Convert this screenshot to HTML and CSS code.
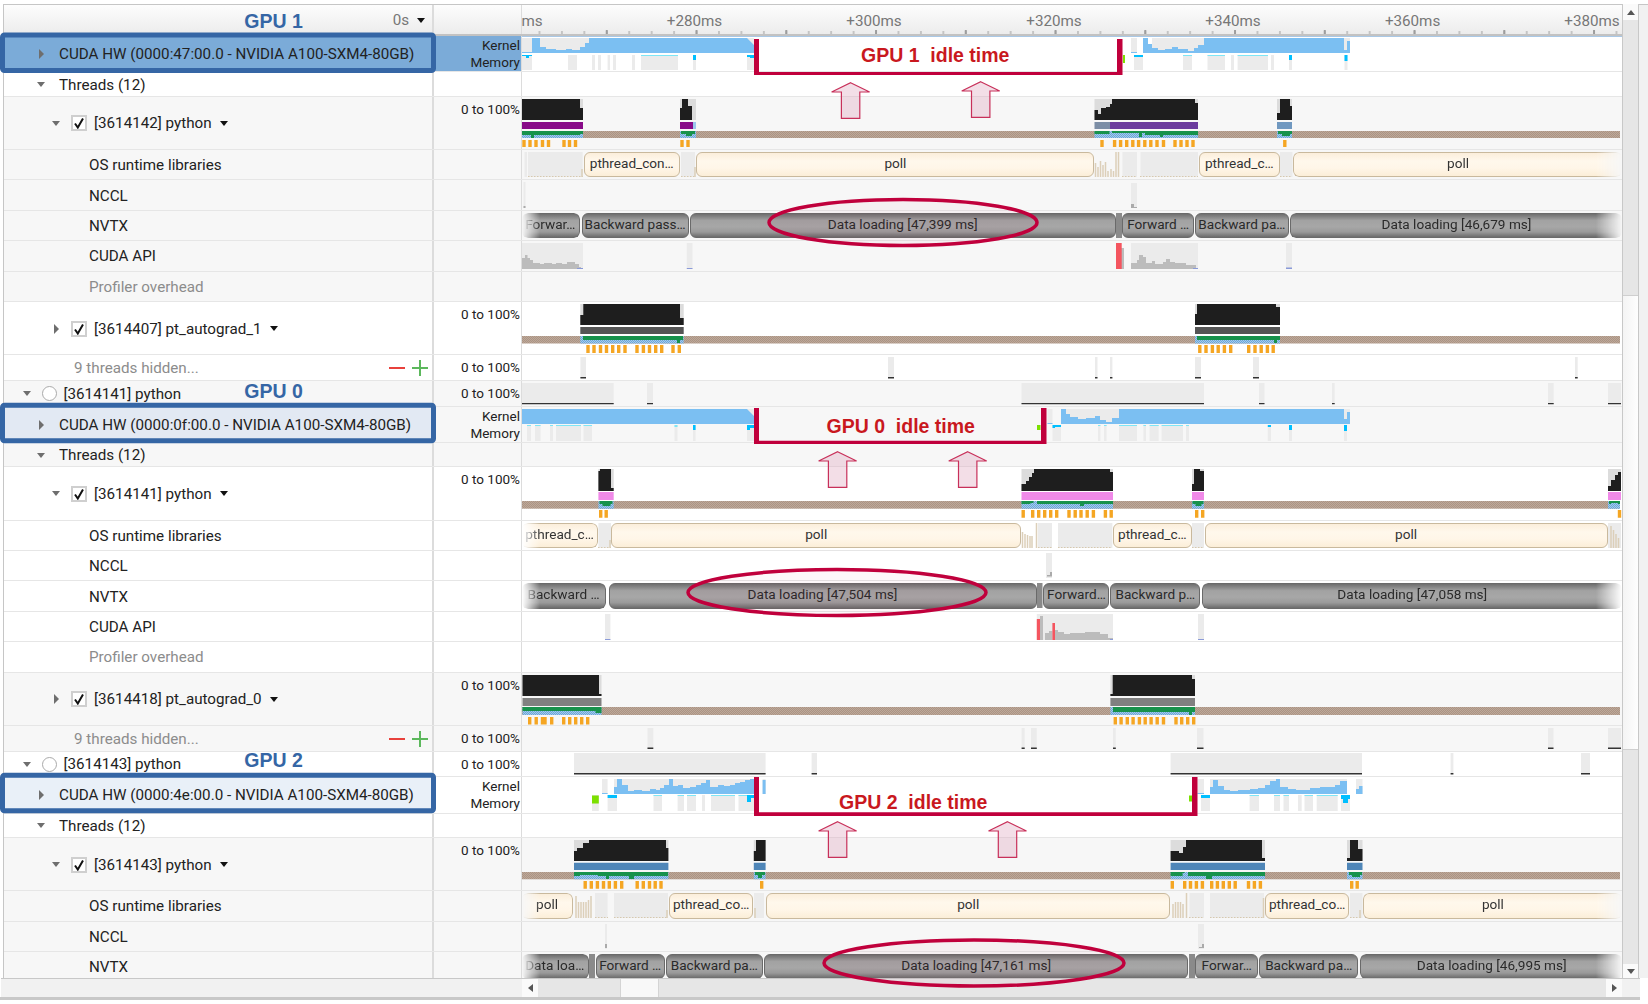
FILE: index.html
```html
<!DOCTYPE html>
<html lang="en">
<head>
    <meta charset="UTF-8">
    <title>Nsight Systems timeline</title>
    <link rel="stylesheet" href="styles.css">
</head>
<body>

<svg class="defs" width="0" height="0">
    <defs>
        <pattern id="dither" width="2" height="2" patternUnits="userSpaceOnUse">
            <rect width="2" height="2" fill="#bda899"/><rect width="1" height="1" fill="#ab9484"/><rect x="1" y="1" width="1" height="1" fill="#ab9484"/>
        </pattern>
        <pattern id="dither-blue" width="2" height="2" patternUnits="userSpaceOnUse">
            <rect width="2" height="2" fill="#a5cbec"/><rect width="1" height="1" fill="#6aa5d8"/><rect x="1" y="1" width="1" height="1" fill="#6aa5d8"/>
        </pattern>
        <path id="up-arrow" d="M0 0L19 9.3H9.2V35.6H-9.2V9.3H-19Z"/>
    </defs>
</svg>

<div class="window">
    <div class="frame">
        <div class="rows">

            <div class="row head">
                <div class="label head-label"><span class="time-mode">0s</span><span class="caret-menu"></span></div>
                <div class="scale"></div>
                <div class="track ruler">
                    <span class="tick-label" style="left:-7px">+260ms</span>
                    <span class="tick-label" style="left:172.5px">+280ms</span>
                    <span class="tick-label" style="left:352px">+300ms</span>
                    <span class="tick-label" style="left:532px">+320ms</span>
                    <span class="tick-label" style="left:711px">+340ms</span>
                    <span class="tick-label" style="left:890.6px">+360ms</span>
                    <span class="tick-label" style="left:1070px">+380ms</span>
                </div>
            </div>

            <!-- GPU 1 -->
            <div class="row h-hw">
                <div class="label lv-hw selected"><span class="caret-r"></span>CUDA HW (0000:47:00.0 - NVIDIA A100-SXM4-80GB)</div>
                <div class="scale selected two-line">Kernel<br>Memory</div>
                <div class="track">
                    <svg class="chart" width="1100" height="37" viewBox="522 36 1100 37">
                        <path class="sel-line" d="M522 36.5H1622M522 72.5H1622"/>
                        <path class="pale" d="M522 38h10v15h-10zM540 38h49v15h-49zM747 38h7v15h-7zM1131 38h6v15h-6zM1152 38h52v15h-52zM1344 38h6v15h-6z"/>
                        <path class="kernel" d="M522 53V52H532V38H540V47H546V49H556V50H566V49H572V50H580V47H585V43H589V38H747L754 45V53ZM1131 53V52H1137V53ZM1143 53V38H1148V44H1152V48H1158V50H1165V49H1172V47H1178V49H1188V51H1194V48H1198V45H1204V38H1344V50H1347V41H1350V53Z"/>
                        <path class="pale" d="M522 55h10v15h-10zM568 55h9v15h-9zM592 55h3v15h-3zM598 55h3v15h-3zM607.6 55h2.4v15h-2.4zM613 55h3v15h-3zM632 55h3v15h-3zM641 55h37v15h-37zM693 55h3v15h-3zM747 55h7v15h-7zM1134 55h9v15h-9zM1183 55h9v15h-9zM1207.5 55h17.5v15h-17.5zM1231 55h3v15h-3zM1237.6 55h30.4v15h-30.4zM1271 55h3v15h-3zM1289 55h3v15h-3zM1344.5 55h3v15h-3z"/>
                        <path class="cyan" d="M522 55h10v1h-3v2h-3v-2h-4zM693 55h3v5h-3zM747 55h7v3h-4v-1h-3zM1134 55h9v2h-9zM1289 55h3v5h-3zM1344.5 55h3v6h-3z"/>
                        <path class="cyan-l" d="M641 55h37v1h-37zM1183 55h9v1h-9zM1207.5 55h17.5v1h-17.5zM1237.6 55h30.4v1h-30.4z"/>
                        <rect class="lime" x="1123" y="55" width="2" height="8"/>
                    </svg>
                </div>
            </div>
            <div class="row h-threads">
                <div class="label lv-threads"><span class="caret-d"></span>Threads (12)</div>
                <div class="scale"></div>
                <div class="track"></div>
            </div>
            <div class="row h-thread alt">
                <div class="label lv-thread"><span class="caret-d"></span><span class="check"><svg width="12" height="12" viewBox="0 0 12 12"><path d="M2 6.5L4.8 10.5L10 1.5"/></svg></span>[3614142] python<span class="caret-menu"></span></div>
                <div class="scale">0 to 100%</div>
                <div class="track">
                    <svg class="chart" width="1100" height="53" viewBox="522 97 1100 53">
                        <path class="cpu-bg" d="M522 99h61v21h-61zM680 99h16v21h-16zM1094.5 99h103.5v21h-103.5zM1277 99h15v21h-15z"/>
                        <path class="cpu" d="M522 120V99H580V108H583V120ZM680 120V108H682V99H688V106H692V120ZM1094.5 120V110H1098V114H1101V108H1106V107H1110V104H1112V99H1195V103H1198V120ZM1277 120V113H1280V99H1290V106H1292V120Z"/>
                        <rect x="522" y="122" width="61" height="7" fill="#880a88"/>
                        <rect x="680" y="122" width="13" height="7" fill="#880a88"/>
                        <rect x="693" y="122" width="3" height="7" fill="#9cc7ee"/>
                        <rect x="1094.5" y="122" width="16" height="7" fill="#7c8ea6"/>
                        <rect x="1110" y="122" width="88" height="7" fill="#6c3c9e"/>
                        <rect x="1277" y="122" width="15" height="7" fill="#7098c0"/>
                        <rect x="522" y="131" width="1098" height="7" fill="url(#dither)"/>
                        <path fill="url(#dither-blue)" d="M522 131h61v7h-61zM680 131h16v7h-16zM1094.5 131h103.5v7h-103.5zM1277 131h15v7h-15z"/>
                        <path class="green" d="M522 131h61v3h-3v1h-40h-6v3h-3v-3h-9zM681 131h14v3h-3v2h-6v-2h-5zM1094.5 131h15v3h-15zM1112 131h86v4h-35v2h-3v-2h-15v-2h-3v4h-3v-4h-27zM1278 131h14v3h-2v2h-8v-2h-4z"/>
                        <path class="ticks" d="M524 140v7M530 140v7M536 140v7M542.5 140v7M548.5 140v7M564 140v7M569.5 140v7M575.5 140v7M682 140v7M688 140v7M1102 140v7M1114.6 140v7M1120.6 140v7M1126.7 140v7M1132.8 140v7M1138.6 140v7M1144.8 140v7M1150.8 140v7M1157 140v7M1163.5 140v7M1175 140v7M1181 140v7M1187 140v7M1193 140v7M1284.8 140v7"/>
                    </svg>
                </div>
            </div>
            <div class="row h-sub alt">
                <div class="label lv-sub">OS runtime libraries</div>
                <div class="scale"></div>
                <div class="track">
                    <svg class="chart" width="1100" height="30" viewBox="522 150 1100 30">
                        <path class="pale" d="M524.5 152h2.5v25h-2.5zM528 152h54.7v25h-54.7zM681 152h14v25h-14zM1122.4 152h14.6v25h-14.6zM1140.5 152h57.5v25h-57.5zM1280 152h12.5v25h-12.5z"/>
                        <path class="dots" d="M528 176.5H583M681 176.5H695M1122 176.5H1137M1140 176.5H1198M1280 176.5H1292"/>
                        <path class="hatch" d="M582 177v-8M695 177v-10M1095.5 177v-14M1098 177v-10M1100.5 177v-16M1103 177v-12M1105.5 177v-15M1108 177v-6M1111 177v-8M1113.5 177v-6M1116 177v-25M1118.5 177v-25"/>
                    </svg>
                    <span class="slice os" style="left:61.5px;width:96.5px">pthread_con…</span>
                    <span class="slice os" style="left:174.4px;width:398px">poll</span>
                    <span class="slice os" style="left:677px;width:80.6px">pthread_c…</span>
                    <span class="slice os fade-r" style="left:771px;width:329px">poll</span>
                </div>
            </div>
            <div class="row h-sub alt">
                <div class="label lv-sub">NCCL</div>
                <div class="scale"></div>
                <div class="track">
                    <svg class="chart" width="1100" height="30" viewBox="522 180 1100 30">
                        <path class="pale" d="M523.5 182h2v26h-2zM1131 183h6v25h-6z"/>
                        <path class="foot" d="M523.5 206h2v2h-2zM1131 204h3v3h3v1h-6z"/>
                    </svg>
                </div>
            </div>
            <div class="row h-sub alt">
                <div class="label lv-sub">NVTX</div>
                <div class="scale"></div>
                <div class="track">
                    <svg class="chart" width="1100" height="30" viewBox="522 211 1100 30">
                        <rect class="sliver" x="1116" y="213" width="6" height="25"/>
                    </svg>
                    <span class="slice nvtx fade-l" style="left:0;width:57.6px">Forwar…</span>
                    <span class="slice nvtx" style="left:59.5px;width:107.2px">Backward pass…</span>
                    <span class="slice nvtx" style="left:168px;width:425.5px">Data loading [47,399 ms]</span>
                    <span class="slice nvtx" style="left:600.4px;width:71.6px">Forward …</span>
                    <span class="slice nvtx" style="left:673px;width:93.7px">Backward pa…</span>
                    <span class="slice nvtx fade-r" style="left:768px;width:332px">Data loading [46,679 ms]</span>
                </div>
            </div>
            <div class="row h-sub alt">
                <div class="label lv-sub">CUDA API</div>
                <div class="scale"></div>
                <div class="track">
                    <svg class="chart" width="1100" height="30" viewBox="522 241 1100 30">
                        <path class="pale" d="M522 243h61v26h-61zM686.8 243h5.7v26h-5.7zM1131 243h67v26h-67zM1286 243h6v26h-6z"/>
                        <path class="bars" d="M522 269V258H525V255H527.5V258H530V260H533V263H540V264H544V263H552V264H556V263H562V264H567V262H575V264H579V267H581V269ZM1116 269V248H1124V269ZM1131 269V263H1137V260H1139V255H1143V257H1146V263H1152V261H1155V264H1163V262H1166V259H1170V262H1175V263H1186V265H1196V269Z"/>
                        <rect x="1116" y="243" width="5.7" height="26" fill="url(#red-fade)" class="red"/>
                        <path class="foot-blue" d="M577 268h6v1h-6zM686.8 268h5.7v1h-5.7zM1193 268h5v1h-5zM1286 267.5h6v1.5h-6z"/>
                    </svg>
                </div>
            </div>
            <div class="row h-sub alt">
                <div class="label lv-sub muted">Profiler overhead</div>
                <div class="scale"></div>
                <div class="track"></div>
            </div>
            <div class="row h-thread">
                <div class="label lv-thread"><span class="caret-r"></span><span class="check"><svg width="12" height="12" viewBox="0 0 12 12"><path d="M2 6.5L4.8 10.5L10 1.5"/></svg></span>[3614407] pt_autograd_1<span class="caret-menu"></span></div>
                <div class="scale">0 to 100%</div>
                <div class="track">
                    <svg class="chart" width="1100" height="53" viewBox="522 302 1100 53">
                        <path class="cpu-bg" d="M580.3 304h103.4v21h-103.4zM1195 304h85v21h-85z"/>
                        <path class="cpu" d="M580.3 325V315H583.3V304H680V318H683.7V325ZM1195 325V314H1197V304H1276V307H1280V325Z"/>
                        <rect x="580.3" y="327" width="103.4" height="7" fill="#555"/>
                        <rect x="1195" y="327" width="85" height="7" fill="#555"/>
                        <rect x="522" y="336" width="1098" height="7.5" fill="url(#dither)"/>
                        <path fill="url(#dither-blue)" d="M580.3 336h103.4v7.5h-103.4zM1195 336h85v7.5h-85z"/>
                        <path class="green" d="M583 336h100v4h-3v3h-3v-3h-94zM1197 336h83v4h-3v3h-3v-3h-77z"/>
                        <path class="ticks" d="M588 345v8M594 345v8M600.5 345v8M606.5 345v8M612.7 345v8M618.7 345v8M625 345v8M637 345v8M643.4 345v8M649.5 345v8M655.7 345v8M661.7 345v8M673 345v8M679.3 345v8M1199.8 345v8M1206 345v8M1212.4 345v8M1218.2 345v8M1224.4 345v8M1230.7 345v8M1248.7 345v8M1255 345v8M1261.2 345v8M1267.4 345v8M1273.2 345v8"/>
                    </svg>
                </div>
            </div>
            <div class="row h-hidden">
                <div class="label lv-hidden muted">9 threads hidden...<span class="hide-btns"><svg width="39" height="16" viewBox="0 0 39 16"><path class="minus" d="M0 8H16"/><path class="plus" d="M23 8H39M31 0V16"/></svg></span></div>
                <div class="scale">0 to 100%</div>
                <div class="track">
                    <svg class="chart" width="1100" height="26" viewBox="522 355 1100 26">
                        <path class="pale" d="M580.4 357h5.6v21h-5.6zM888 357h6v21h-6zM1095 357h2.5v21h-2.5zM1110 357h2.4v21h-2.4zM1195 357h6v21h-6zM1253 357h6v21h-6zM1575 357h2.7v21h-2.7z"/>
                        <path class="black-foot" d="M580.4 377h5.6v1.5h-5.6zM888 377h6v1.5h-6zM1095 377h2.5v1.5h-2.5zM1110 377h2.4v1.5h-2.4zM1195 377h6v1.5h-6zM1253 377h6v1.5h-6zM1575 377h2.7v1.5h-2.7z"/>
                    </svg>
                </div>
            </div>

            <!-- GPU 0 -->
            <div class="row h-proc alt">
                <div class="label lv-proc"><span class="caret-d"></span><span class="radio"></span>[3614141] python</div>
                <div class="scale">0 to 100%</div>
                <div class="track">
                    <svg class="chart" width="1100" height="26" viewBox="522 381 1100 26">
                        <path class="pale" d="M522 383h91.7v21h-91.7zM647 383h6v21h-6zM1021.5 383h182.5v21h-182.5zM1259 383h5.5v21h-5.5zM1332 383h2.7v21h-2.7zM1548 383h5.7v21h-5.7zM1608 383h13v21h-13z"/>
                        <path class="black-foot" d="M522 403h91.7v1.2h-91.7zM647 403h6v1.2h-6zM1021.5 403h182.5v1.2h-182.5zM1259 403h5.5v1.2h-5.5zM1332 403h2.7v1.2h-2.7zM1548 403h5.7v1.2h-5.7zM1608 403h13v1.2h-13z"/>
                    </svg>
                </div>
            </div>
            <div class="row h-hw alt">
                <div class="label lv-hw hw-open"><span class="caret-r"></span>CUDA HW (0000:0f:00.0 - NVIDIA A100-SXM4-80GB)</div>
                <div class="scale two-line">Kernel<br>Memory</div>
                <div class="track">
                    <svg class="chart" width="1100" height="37" viewBox="522 407 1100 37">
                        <path class="pale" d="M747 409h7v15h-7zM1047.5 409h5v15h-5zM1066 409h53v15h-53zM1344 409h6v15h-6z"/>
                        <path class="kernel" d="M522 424V409H747L754 416V424ZM1047.5 424V423H1052.5V424ZM1061 424V409H1066V414H1070V417H1078V419H1086V418H1095V416H1100V420H1106V422H1112V418H1119V409H1344V419H1347V412H1350V424Z"/>
                        <path class="pale" d="M527 425h4v16h-4zM535 425h5.6v16h-5.6zM550 425h3v16h-3zM556 425h25v16h-25zM583.5 425h8.5v16h-8.5zM674.5 425h3v16h-3zM693 425h2.6v16h-2.6zM747 425h7v16h-7zM1052.5 425h8.5v16h-8.5zM1098 425h2.4v16h-2.4zM1104 425h2.6v16h-2.6zM1119 425h18v16h-18zM1143.4 425h2.6v16h-2.6zM1149.6 425h9.1v16h-9.1zM1161.6 425h21.4v16h-21.4zM1186 425h3v16h-3zM1267.8 425h3.2v16h-3.2zM1289 425h3v16h-3zM1344 425h3v16h-3z"/>
                        <path class="cyan-l" d="M527 425h4v1h-4zM535 425h5.6v1h-5.6zM550 425h3v1h-3zM556 425h25v1h-25zM583.5 425h8.5v1h-8.5zM674.5 425h3v2h-3zM1098 425h2.4v1h-2.4zM1104 425h2.6v1h-2.6zM1119 425h18v1h-18zM1143.4 425h2.6v1h-2.6zM1149.6 425h9.1v1h-9.1zM1161.6 425h21.4v1h-21.4zM1186 425h3v1h-3z"/>
                        <path class="cyan" d="M693 425h2.6v5h-2.6zM747 425h7v3h-4v2h-3zM1052.5 425h8.5v2h-6v1h-2.5zM1267.8 425h3.2v2h-3.2zM1289 425h3v5h-3zM1344 425h3v6h-3z"/>
                        <rect class="lime" x="1037" y="425" width="3.5" height="5"/>
                    </svg>
                </div>
            </div>
            <div class="row h-threads alt">
                <div class="label lv-threads"><span class="caret-d"></span>Threads (12)</div>
                <div class="scale"></div>
                <div class="track"></div>
            </div>
            <div class="row h-thread">
                <div class="label lv-thread"><span class="caret-d"></span><span class="check"><svg width="12" height="12" viewBox="0 0 12 12"><path d="M2 6.5L4.8 10.5L10 1.5"/></svg></span>[3614141] python<span class="caret-menu"></span></div>
                <div class="scale">0 to 100%</div>
                <div class="track">
                    <svg class="chart" width="1100" height="53" viewBox="522 467 1100 53">
                        <path class="cpu-bg" d="M598.4 469h15.3v22h-15.3zM1021.5 469h91.5v22h-91.5zM1192 469h12v22h-12zM1608 469h13v22h-13z"/>
                        <path class="cpu" d="M598.4 491V471H600V469H611V488H613.7V491ZM1021.5 491V484H1026V481H1029V477H1032V473H1034V469H1110V472H1113V491ZM1192 491V484H1194V469H1200V471H1204V491ZM1608 491V486H1611V480H1615V475H1618V472H1621V491Z"/>
                        <path class="pink" d="M598.4 492h15.3v8h-15.3zM1021.5 492h91.5v8h-91.5zM1192 492h12v8h-12zM1608 492h13v8h-13z"/>
                        <rect x="522" y="501" width="1098" height="7.7" fill="url(#dither)"/>
                        <path fill="url(#dither-blue)" d="M598.4 501h15.3v7.7h-15.3zM1021.5 501h91.5v7.7h-91.5zM1192 501h12v7.7h-12zM1608 501h12v7.7h-12z"/>
                        <path class="green" d="M599.5 501h13v3h-2v2h-8v-2h-3zM1021.5 501h12v2h-3v1h-9zM1037 501h76v3h-29v2h-4v-2h-43zM1192.5 501h11v3h-2v2h-6v-2h-3zM1609 501h11v3h-2v-1h-7v1h-2z"/>
                        <path class="ticks" d="M600.7 510v7.7M606.2 510v7.7M1023.2 510v7.7M1032.7 510v7.7M1038.7 510v7.7M1044.7 510v7.7M1050.7 510v7.7M1056.7 510v7.7M1069 510v7.7M1075.2 510v7.7M1081 510v7.7M1087.2 510v7.7M1093.4 510v7.7M1105.4 510v7.7M1111.2 510v7.7M1196.7 510v7.7M1202.7 510v7.7M1619.5 510v7.7"/>
                    </svg>
                </div>
            </div>
            <div class="row h-sub">
                <div class="label lv-sub">OS runtime libraries</div>
                <div class="scale"></div>
                <div class="track">
                    <svg class="chart" width="1100" height="30" viewBox="522 521 1100 30">
                        <path class="pale" d="M598.4 523h12.6v25h-12.6zM1038 523h14v25h-14zM1058 523h54.4v25h-54.4zM1192 523h12v25h-12zM1608 523h13v25h-13z"/>
                        <path class="dots" d="M598 547.5H611M1038 547.5H1052M1058 547.5H1112M1192 547.5H1204"/>
                        <path class="hatch" d="M1022.5 548v-16M1025 548v-14M1027.5 548v-13M1030 548v-12M1032 548v-12M1036.5 548v-25M610 548v-8M1611 548v-22M1613.5 548v-18M1616 548v-14M1618.5 548v-10"/>
                    </svg>
                    <span class="slice os fade-l" style="left:0;width:76px">pthread_c…</span>
                    <span class="slice os" style="left:89.4px;width:409.6px">poll</span>
                    <span class="slice os" style="left:591px;width:78.7px">pthread_c…</span>
                    <span class="slice os" style="left:682.5px;width:403px">poll</span>
                </div>
            </div>
            <div class="row h-sub">
                <div class="label lv-sub">NCCL</div>
                <div class="scale"></div>
                <div class="track">
                    <svg class="chart" width="1100" height="30" viewBox="522 551 1100 30">
                        <path class="pale" d="M1046 553h6v25h-6z"/>
                        <path class="foot" d="M1047 575h5v1.5h-5zM1050 572h2v4h-2z"/>
                    </svg>
                </div>
            </div>
            <div class="row h-sub">
                <div class="label lv-sub">NVTX</div>
                <div class="scale"></div>
                <div class="track">
                    <svg class="chart" width="1100" height="30" viewBox="522 581 1100 30">
                        <rect class="sliver" x="1037" y="583" width="5.5" height="25"/>
                    </svg>
                    <span class="slice nvtx fade-l" style="left:0;width:84px">Backward …</span>
                    <span class="slice nvtx" style="left:86.5px;width:428px">Data loading [47,504 ms]</span>
                    <span class="slice nvtx" style="left:521.4px;width:66px">Forward…</span>
                    <span class="slice nvtx" style="left:588.3px;width:90px">Backward p…</span>
                    <span class="slice nvtx fade-r" style="left:679.6px;width:420.4px">Data loading [47,058 ms]</span>
                </div>
            </div>
            <div class="row h-sub">
                <div class="label lv-sub">CUDA API</div>
                <div class="scale"></div>
                <div class="track">
                    <svg class="chart" width="1100" height="30" viewBox="522 612 1100 30">
                        <path class="pale" d="M605 614h5.4v26h-5.4zM1036.8 614h76.2v26h-76.2zM1198 614h6v26h-6z"/>
                        <path class="bars" d="M1040 640V616H1043V640ZM1045 640V633H1049V631H1052.4V640ZM1055 640V630H1058V632H1064V634H1070V633H1085V632H1100V634H1108V638H1113V640Z"/>
                        <path class="red" d="M1036.8 640V619H1040V640ZM1052.4 640V623H1055V640Z"/>
                        <path class="foot-blue" d="M605 639h5.4v1h-5.4zM1198 639h6v1h-6zM1110 639h3v1h-3z"/>
                    </svg>
                </div>
            </div>
            <div class="row h-sub">
                <div class="label lv-sub muted">Profiler overhead</div>
                <div class="scale"></div>
                <div class="track"></div>
            </div>
            <div class="row h-thread alt">
                <div class="label lv-thread"><span class="caret-r"></span><span class="check"><svg width="12" height="12" viewBox="0 0 12 12"><path d="M2 6.5L4.8 10.5L10 1.5"/></svg></span>[3614418] pt_autograd_0<span class="caret-menu"></span></div>
                <div class="scale">0 to 100%</div>
                <div class="track">
                    <svg class="chart" width="1100" height="53" viewBox="522 672 1100 53">
                        <path class="cpu-bg" d="M522.5 674h79v21h-79zM1110.4 674h84.6v21h-84.6z"/>
                        <path class="cpu" d="M522.5 695V674H599V693H601.5V695ZM1110.4 695V693H1112.7V674H1192V678H1195V695Z"/>
                        <rect x="522.5" y="697" width="79" height="8" fill="#808080"/>
                        <rect x="1110.4" y="697" width="84.6" height="8" fill="#808080"/>
                        <rect x="522" y="706" width="1098" height="8" fill="url(#dither)"/>
                        <path fill="url(#dither-blue)" d="M522.5 706h79v8h-79zM1110.4 706h84.6v8h-84.6z"/>
                        <path class="green" d="M522.5 706h79v6h-6v-2h-73zM1113 706h82v5h-3v3h-3v-3h-76z"/>
                        <path class="ticks" d="M529.7 716v7.5M536.2 716v7.5M542.5 716v7.5M545 716v7.5M551.7 716v7.5M563.7 716v7.5M569.7 716v7.5M575.7 716v7.5M581.7 716v7.5M587.7 716v7.5M1115.3 716v7.5M1121.1 716v7.5M1127.3 716v7.5M1133.1 716v7.5M1139.4 716v7.5M1145.2 716v7.5M1151.1 716v7.5M1157.2 716v7.5M1163.5 716v7.5M1176 716v7.5M1181.7 716v7.5M1187.7 716v7.5M1193.7 716v7.5"/>
                    </svg>
                </div>
            </div>
            <div class="row h-hidden alt">
                <div class="label lv-hidden muted">9 threads hidden...<span class="hide-btns"><svg width="39" height="16" viewBox="0 0 39 16"><path class="minus" d="M0 8H16"/><path class="plus" d="M23 8H39M31 0V16"/></svg></span></div>
                <div class="scale">0 to 100%</div>
                <div class="track">
                    <svg class="chart" width="1100" height="26" viewBox="522 726 1100 26">
                        <path class="pale" d="M647.5 728h5.8v21h-5.8zM1021.6 728h3.1v21h-3.1zM1031 728h5.8v21h-5.8zM1113 728h2.8v21h-2.8zM1197 728h6.5v21h-6.5zM1548 728h5.5v21h-5.5zM1608 728h13v21h-13z"/>
                        <path class="black-foot" d="M647.5 747.5h5.8v1.5h-5.8zM1021.6 747.5h3.1v1.5h-3.1zM1031 747.5h5.8v1.5h-5.8zM1113 747.5h2.8v1.5h-2.8zM1197 747.5h6.5v1.5h-6.5zM1548 747.5h5.5v1.5h-5.5zM1608 747.5h13v1.5h-13z"/>
                    </svg>
                </div>
            </div>

            <!-- GPU 2 -->
            <div class="row h-proc">
                <div class="label lv-proc"><span class="caret-d"></span><span class="radio"></span>[3614143] python</div>
                <div class="scale">0 to 100%</div>
                <div class="track">
                    <svg class="chart" width="1100" height="26" viewBox="522 752 1100 26">
                        <path class="pale" d="M574 753h191.6v21h-191.6zM811.6 753h5.4v21h-5.4zM1170.6 753h191.4v21h-191.4zM1450.6 753h2.8v21h-2.8zM1581 753h9v21h-9z"/>
                        <path class="black-foot" d="M574 773h191.6v1.5h-191.6zM811.6 773h5.4v1.5h-5.4zM1170.6 773h191.4v1.5h-191.4zM1450.6 773h2.8v1.5h-2.8zM1581 773h9v1.5h-9z"/>
                    </svg>
                </div>
            </div>
            <div class="row h-hw">
                <div class="label lv-hw hw-open hw-light"><span class="caret-r"></span>CUDA HW (0000:4e:00.0 - NVIDIA A100-SXM4-80GB)</div>
                <div class="scale two-line">Kernel<br>Memory</div>
                <div class="track">
                    <svg class="chart" width="1100" height="37" viewBox="522 777 1100 37">
                        <path class="pale" d="M602 779h5.6v15h-5.6zM614 779h140v15h-140zM762.6 779h3v15h-3zM1197.5 779h6.5v15h-6.5zM1210 779h137v15h-137zM1356 779h6.5v15h-6.5z"/>
                        <path class="kernel" d="M602 794V793H607.6V794ZM614 794V787H617V779H622V785H628V791H634V790H642V791H650V789H656V790H660V788H664V785H669V779H673V786H678V785H683V788H690V787H696V785H701V783H706V780H710V787H718V785H724V786H730V785H735V783H740V782H745V780H750V779H754V794ZM762.6 794V780H765.6V794ZM1197.5 794V793H1204V794ZM1210 794V787H1213V780H1218V786H1224V790H1230V791H1238V790H1250V789H1258V788H1265V785H1270V781H1276V779H1280V787H1288V789H1296V790H1310V788H1320V787H1335V785H1340V781H1347V794ZM1356 794V789H1359V786H1362.5V794Z"/>
                        <path class="pale" d="M592 795h6.8v16h-6.8zM607.6 795h9.4v16h-9.4zM653.5 795h8.5v16h-8.5zM677.6 795h6.4v16h-6.4zM687 795h9v16h-9zM702 795h3v16h-3zM711 795h24v16h-24zM738.5 795h15.5v16h-15.5zM1201 795h9v16h-9zM1249.6 795h9.4v16h-9.4zM1274 795h6v16h-6zM1283.5 795h5.5v16h-5.5zM1298 795h3.7v16h-3.7zM1304.5 795h8.5v16h-8.5zM1316.7 795h21v16h-21zM1341 795h9v16h-9z"/>
                        <path class="cyan-l" d="M653.5 795h8.5v1h-8.5zM677.6 795h6.4v1h-6.4zM687 795h9v1h-9zM711 795h24v1h-24zM738.5 795h15.5v1h-15.5zM1249.6 795h9.4v1h-9.4zM1274 795h6v1h-6zM1283.5 795h5.5v1h-5.5zM1304.5 795h8.5v1h-8.5zM1316.7 795h21v1h-21z"/>
                        <path class="cyan" d="M607.6 795h9.4v3h-9.4zM747 795h7v3h-3v4h-4zM1201 795h9v3h-9zM1341 795h9v4h-2v4h-5v-4h-2z"/>
                        <rect class="lime" x="592" y="795.5" width="6.8" height="8"/>
                        <rect class="lime" x="1189" y="795.5" width="3" height="6"/>
                    </svg>
                </div>
            </div>
            <div class="row h-threads">
                <div class="label lv-threads"><span class="caret-d"></span>Threads (12)</div>
                <div class="scale"></div>
                <div class="track"></div>
            </div>
            <div class="row h-thread alt">
                <div class="label lv-thread"><span class="caret-d"></span><span class="check"><svg width="12" height="12" viewBox="0 0 12 12"><path d="M2 6.5L4.8 10.5L10 1.5"/></svg></span>[3614143] python<span class="caret-menu"></span></div>
                <div class="scale">0 to 100%</div>
                <div class="track">
                    <svg class="chart" width="1100" height="53" viewBox="522 838 1100 53">
                        <path class="cpu-bg" d="M574 840h94.4v21h-94.4zM753.8 840h11.8v21h-11.8zM1170.6 840h94.4v21h-94.4zM1347 840h15.5v21h-15.5z"/>
                        <path class="cpu" d="M574 861V851H577V848H583V843H589V840H666V848H668.4V861ZM753.8 861V851H756V840H765.6V861ZM1170.6 861V851H1179V853H1183V847H1186V840H1262V858H1265V861ZM1347 861V858H1350V840H1358V849H1362.5V861Z"/>
                        <path class="steel" d="M574 862.7h94.4v7.3h-94.4zM753.8 862.7h11.8v7.3h-11.8zM1170.6 862.7h94.4v7.3h-94.4zM1347 862.7h15.5v7.3h-15.5z"/>
                        <rect x="522" y="872" width="1098" height="7.3" fill="url(#dither)"/>
                        <path fill="url(#dither-blue)" d="M574 872h94.4v7.3h-94.4zM753.8 872h11.8v7.3h-11.8zM1170.6 872h94.4v7.3h-94.4zM1347 872h15.5v7.3h-15.5z"/>
                        <path class="green" d="M574 872h94v4h-34v3h-5v-3h-20v3h-3v-3h-8v-1h-18v1h-6zM755 872h10v3h-3v3h-4v-3h-3zM1170.6 872h14v1h-2v3h-12zM1188 872h77v4h-53v3h-6v-3h-18zM1349 872h13v3h-2v2h-8v-2h-3z"/>
                        <path class="ticks" d="M585.2 881v7.7M591.3 881v7.7M597.4 881v7.7M603.5 881v7.7M609.3 881v7.7M615.4 881v7.7M621.7 881v7.7M637.2 881v7.7M643.3 881v7.7M649.5 881v7.7M655.2 881v7.7M661 881v7.7M761.7 881v7.7M1172.3 881v7.7M1184.7 881v7.7M1190.5 881v7.7M1196.4 881v7.7M1202.4 881v7.7M1211.7 881v7.7M1217.4 881v7.7M1223.3 881v7.7M1229.3 881v7.7M1235.2 881v7.7M1248.5 881v7.7M1254.4 881v7.7M1260.4 881v7.7M1351.7 881v7.7M1357.2 881v7.7"/>
                    </svg>
                </div>
            </div>
            <div class="row h-sub alt">
                <div class="label lv-sub">OS runtime libraries</div>
                <div class="scale"></div>
                <div class="track">
                    <svg class="chart" width="1100" height="30" viewBox="522 891 1100 30">
                        <path class="pale" d="M595 893h12.6v25h-12.6zM614 893h54v25h-54zM754 893h10v25h-10zM1189.5 893h14.5v25h-14.5zM1210 893h54v25h-54zM1350 893h12.5v25h-12.5z"/>
                        <path class="dots" d="M595 917.5H608M614 917.5H668M1189 917.5H1204M1210 917.5H1264M1350 917.5H1362"/>
                        <path class="hatch" d="M576 918v-22M578.5 918v-16M581 918v-16M583.5 918v-16M586 918v-16M588.5 918v-18M591 918v-22M1173 918v-14M1175.5 918v-16M1178 918v-16M1180.5 918v-16M1183 918v-14M1186.5 918v-25M667 918v-8M1263.5 918v-20M755 918v-10M1360 918v-8"/>
                    </svg>
                    <span class="slice os fade-l" style="left:0;width:51px">poll</span>
                    <span class="slice os" style="left:146.8px;width:84.6px">pthread_co…</span>
                    <span class="slice os" style="left:244.4px;width:403.6px">poll</span>
                    <span class="slice os" style="left:743.3px;width:83.7px">pthread_co…</span>
                    <span class="slice os fade-r" style="left:840.8px;width:259.2px">poll</span>
                </div>
            </div>
            <div class="row h-sub alt">
                <div class="label lv-sub">NCCL</div>
                <div class="scale"></div>
                <div class="track">
                    <svg class="chart" width="1100" height="30" viewBox="522 922 1100 30">
                        <path class="pale" d="M605 924h2v25h-2zM1198 924h6v25h-6z"/>
                        <path class="foot" d="M605 944h2v4h-2zM1199 947h4v1h-4zM1202 944h2v4h-2z"/>
                    </svg>
                </div>
            </div>
            <div class="row h-sub alt">
                <div class="label lv-sub">NVTX</div>
                <div class="scale"></div>
                <div class="track">
                    <svg class="chart" width="1100" height="30" viewBox="522 952 1100 30">
                        <rect class="sliver" x="589" y="954" width="6" height="25"/>
                        <rect class="sliver" x="1189" y="954" width="6" height="25"/>
                    </svg>
                    <span class="slice nvtx fade-l" style="left:0;width:66.5px">Data loa…</span>
                    <span class="slice nvtx" style="left:73.7px;width:69px">Forward …</span>
                    <span class="slice nvtx" style="left:144px;width:96.6px">Backward pa…</span>
                    <span class="slice nvtx" style="left:242px;width:424.4px">Data loading [47,161 ms]</span>
                    <span class="slice nvtx" style="left:673.4px;width:62.6px">Forwar…</span>
                    <span class="slice nvtx" style="left:737.4px;width:98.6px">Backward pa…</span>
                    <span class="slice nvtx fade-r" style="left:838.4px;width:261.6px">Data loading [46,995 ms]</span>
                </div>
            </div>

        </div>

        <div class="vscroll">
            <div class="sb-btn"><span class="arrow-up"></span></div>
            <div class="sb-track"></div>
            <div class="sb-thumb"></div>
            <div class="sb-track sb-track-low"></div>
            <div class="sb-btn sb-btn-low"><span class="arrow-down"></span></div>
        </div>
    </div>

    <div class="hscroll">
        <div class="hs-side"></div>
        <div class="hs-bar">
            <div class="hs-btn"><span class="arrow-left"></span></div>
            <div class="hs-track hs-before"></div>
            <div class="hs-thumb"></div>
            <div class="hs-track"></div>
            <div class="hs-btn"><span class="arrow-right"></span></div>
        </div>
    </div>
    <div class="base-line"></div>

    <svg class="notes" width="1648" height="1004" viewBox="0 0 1648 1004">
        <rect class="gpu-box" x="2.5" y="35" width="431" height="35.5" rx="2"/>
        <rect class="gpu-box" x="2.5" y="405.2" width="431" height="35.6" rx="2"/>
        <rect class="gpu-box" x="2.5" y="775.2" width="431" height="35.6" rx="2"/>
        <text class="gpu-name" x="273.5" y="28">GPU 1</text>
        <text class="gpu-name" x="273.5" y="398">GPU 0</text>
        <text class="gpu-name" x="273.5" y="767">GPU 2</text>

        <path class="idle-mark" d="M754 39h5v33h358v-33h5.5v36H754z"/>
        <path class="idle-mark" d="M754 408h5v32.8h282v-32.8h5.500v36H754z"/>
        <path class="idle-mark" d="M754 777h5v35.3h433v-35.3h5.500v39H754z"/>
        <text class="idle-text" x="861" y="62">GPU 1  idle time</text>
        <text class="idle-text" x="826.5" y="432.5">GPU 0  idle time</text>
        <text class="idle-text" x="839" y="808.5">GPU 2  idle time</text>

        <use class="arrow" href="#up-arrow" x="850.6" y="82.7"/>
        <use class="arrow" href="#up-arrow" x="980.7" y="81.7"/>
        <use class="arrow" href="#up-arrow" x="837.6" y="451.7"/>
        <use class="arrow" href="#up-arrow" x="967.7" y="451.7"/>
        <use class="arrow" href="#up-arrow" x="837.6" y="821.7"/>
        <use class="arrow" href="#up-arrow" x="1007.5" y="821.7"/>

        <ellipse class="loop" cx="903" cy="222.5" rx="134" ry="23"/>
        <ellipse class="loop" cx="837" cy="592.5" rx="149" ry="23"/>
        <ellipse class="loop" cx="974" cy="963" rx="150" ry="23"/>
    </svg>
</div>

</body>
</html>
```

FILE: styles.css
```css
* {
    box-sizing: border-box;
}

body {
    margin: 0;
    background-color: white;
    font-family: Roboto, "Liberation Sans", sans-serif;
    font-size: 15.2px;
    color: #222;
}

.defs {
    position: absolute;
}

.window {
    position: relative;
    width: 1648px;
    height: 1004px;
    overflow: hidden;
}

.frame {
    display: flex;
    height: 974px;
    margin-top: 4px;
    margin-left: 3px;
    border-top: 1px solid #c6c6c6;
    border-left: 1px solid #c6c6c6;
    background-color: #f1f1f1;
}

.rows {
    width: 1618px;
    height: 973px;
    overflow: hidden;
    flex-shrink: 0;
    background-color: white;
}

/* one row = label, scale, track */
.row {
    display: grid;
    grid-template-columns: 430px 88px 1100px;
    border-bottom: 1px solid #e6e6e6;
    background-color: white;
}

.row.alt {
    background-color: #f7f7f7;
}

.h-hw { height: 36.4px; }
.h-threads { height: 24.4px; }
.h-thread { height: 53.2px; }
.h-sub { height: 30.4px; }
.h-hidden { height: 25.9px; }
.h-proc { height: 25.6px; }

.label {
    display: flex;
    align-items: center;
    padding-top: 1px;
    border-right: 2px solid #dcdcdc;
    white-space: nowrap;
}

.scale {
    padding-top: 4px;
    padding-right: 1px;
    border-right: 1px solid #dcdcdc;
    text-align: right;
    font-size: 13.5px;
    line-height: 17px;
    color: #222;
}

.scale.two-line {
    padding-top: 1px;
}

.track {
    position: relative;
    overflow: hidden;
}

.chart {
    position: absolute;
    top: 0;
    left: 0;
    display: block;
    overflow: visible;
}

.muted {
    color: #8c8c8c;
}

.selected {
    background-color: #7babd8;
}

.hw-open {
    background-color: #e2e9f3;
}

.hw-light {
    background-color: #e9f0f8;
}

/* label indents */
.lv-hw { padding-left: 35px; }
.lv-threads { padding-left: 33px; }
.lv-thread { padding-left: 48px; }
.lv-sub { padding-left: 85px; }
.lv-hidden { padding-left: 70px; }
.lv-proc { padding-left: 18.5px; }

.caret-r {
    width: 0;
    height: 0;
    margin-right: 15px;
    border-top: 5px solid transparent;
    border-bottom: 5px solid transparent;
    border-left: 5px solid #6e6e6e;
}

.caret-d {
    width: 0;
    height: 0;
    margin-right: 14px;
    border-left: 4px solid transparent;
    border-right: 4px solid transparent;
    border-top: 5px solid #6e6e6e;
}

.lv-thread .caret-r {
    margin-left: 2px;
    margin-right: 12px;
}

.lv-thread .caret-d {
    margin-right: 11px;
}

.lv-proc .caret-d {
    margin-right: 11px;
}

.caret-menu {
    width: 0;
    height: 0;
    margin-left: 8px;
    border-left: 4px solid transparent;
    border-right: 4px solid transparent;
    border-top: 5px solid #111;
}

.check {
    display: flex;
    align-items: center;
    justify-content: center;
    width: 16px;
    height: 16px;
    margin-right: 7px;
    border: 2px solid #cfcfcf;
    background-color: white;
}

.check path {
    fill: none;
    stroke: #111;
    stroke-width: 2;
}

.radio {
    width: 15px;
    height: 15px;
    margin-right: 7px;
    border: 1.5px solid #aaa;
    border-radius: 50%;
    background-color: white;
}

.hide-btns {
    display: flex;
    margin-left: auto;
    margin-right: 4px;
}

.minus {
    fill: none;
    stroke: #e8413c;
    stroke-width: 2;
}

.plus {
    fill: none;
    stroke: #5cb85c;
    stroke-width: 2;
}

/* header */
.head {
    height: 31px;
    background: linear-gradient(#fdfdfd, #ececec);
    border-bottom: 2px solid #c2c2c2;
}

.head-label {
    justify-content: flex-end;
    padding-right: 7px;
}

.time-mode {
    color: #777;
}

.head .scale {
    padding: 0;
}

.ruler {
    background-image:
        linear-gradient(to right, #9d9d9d 2px, transparent 2px),
        linear-gradient(to right, #c4c4c4 2px, transparent 2px);
    background-size: 89.76px 4px, 22.44px 3px;
    background-position: 83.8px bottom, 16.5px bottom;
    background-repeat: repeat-x;
}

.tick-label {
    position: absolute;
    top: 7px;
    transform: translateX(-50%);
    color: #777;
    white-space: nowrap;
    line-height: 18px;
}

/* timeline drawing */
.pale { fill: #ebebeb; }
.cpu-bg { fill: #dcdcdc; }
.cpu { fill: #1e1e1e; }
.kernel { fill: #7bbff2; }
.cyan { fill: #00bfff; }
.cyan-l { fill: #7ee6f6; }
.lime { fill: #7ce000; }
.green { fill: #17924c; }
.pink { fill: #f08ae8; }
.steel { fill: #4f86b8; }
.red { fill: #f4555f; }
.bars { fill: #bcbcbc; }
.foot { fill: #aaa; }
.foot-blue { fill: #8a9ad8; }
.black-foot { fill: #333; }
.sliver { fill: #8a8a8a; }

.sel-line {
    fill: none;
    stroke: #a9c8e6;
}

.ticks {
    fill: none;
    stroke: #f5a623;
    stroke-width: 3.4;
}

.hatch {
    fill: none;
    stroke: #dccfb9;
    stroke-width: 1.5;
}

.dots {
    fill: none;
    stroke: #d6c8ae;
    stroke-dasharray: 1.5 1.5;
}

/* named slices */
.slice {
    position: absolute;
    top: 2px;
    height: 25.5px;
    overflow: hidden;
    border-radius: 6px;
    font-size: 13.6px;
    line-height: 21px;
    text-align: center;
    white-space: nowrap;
    color: #333;
}

.slice.os {
    background: linear-gradient(#fbeedb, #fff8ec 35%, #fff6e8 65%, #fbeed8);
    border: 1.5px solid #c9b99d;
}

.slice.nvtx {
    background: linear-gradient(#6f6f6f, #a2a2a2 28%, #a7a7a7 55%, #9a9a9a 78%, #6c6c6c);
    border: 1px solid #6a6a6a;
    color: #2a2a2a;
}

.fade-l {
    -webkit-mask-image: linear-gradient(to right, transparent, #000 18px);
    mask-image: linear-gradient(to right, transparent, #000 18px);
    border-left: none !important;
}

.fade-r {
    -webkit-mask-image: linear-gradient(to left, transparent, #000 26px);
    mask-image: linear-gradient(to left, transparent, #000 26px);
    border-right: none !important;
}

/* scrollbars */
.vscroll {
    display: flex;
    flex-direction: column;
    width: 17px;
    height: 974px;
    margin-top: -1px;
    border-left: 1px solid #c8c8c8;
    border-right: 1px solid #c8c8c8;
}

.sb-btn {
    display: flex;
    align-items: center;
    justify-content: center;
    height: 16px;
    background-color: #fafafa;
}

.sb-btn-low {
    height: 14px;
}

.sb-track {
    height: 275px;
    background-color: #e6e6e6;
}

.sb-track-low {
    height: 214px;
}

.sb-thumb {
    height: 455px;
    background: linear-gradient(to right, #f4f4f4, #fefefe);
    border-top: 1px solid #cfcfcf;
    border-bottom: 1px solid #cfcfcf;
}

.arrow-up,
.arrow-down,
.arrow-left,
.arrow-right {
    width: 0;
    height: 0;
}

.arrow-up {
    border-left: 4px solid transparent;
    border-right: 4px solid transparent;
    border-bottom: 5px solid #555;
}

.arrow-down {
    border-left: 4px solid transparent;
    border-right: 4px solid transparent;
    border-top: 5px solid #555;
}

.arrow-left {
    border-top: 4px solid transparent;
    border-bottom: 4px solid transparent;
    border-right: 5px solid #555;
}

.arrow-right {
    border-top: 4px solid transparent;
    border-bottom: 4px solid transparent;
    border-left: 5px solid #555;
}

.hscroll {
    display: flex;
    width: 1639px;
    height: 19px;
    margin-left: 1px;
    border-top: 1px solid #c8c8c8;
    background-color: #f1f1f1;
}

.hs-side {
    width: 521px;
}

.hs-bar {
    display: flex;
    width: 1100px;
}

.hs-btn {
    display: flex;
    align-items: center;
    justify-content: center;
    width: 16px;
    background-color: #fafafa;
}

.hs-track {
    flex: 1;
    background-color: #e6e6e6;
}

.hs-before {
    flex: none;
    width: 82px;
}

.hs-thumb {
    width: 39px;
    background-color: #f8f8f8;
    border-left: 1px solid #d4d4d4;
    border-right: 1px solid #d4d4d4;
}

.base-line {
    width: 1640px;
    height: 3px;
    background-color: #c8c8c8;
}

/* annotations drawn on top of the screenshot */
.notes {
    position: absolute;
    top: 0;
    left: 0;
    pointer-events: none;
}

.gpu-box {
    fill: none;
    stroke: #3566a5;
    stroke-width: 5;
}

.gpu-name {
    font-family: "Liberation Sans", Arial, sans-serif;
    font-size: 19.5px;
    font-weight: bold;
    fill: #3566a5;
    text-anchor: middle;
}

.idle-mark {
    fill: #c0003c;
}

.idle-text {
    font-family: "Liberation Sans", Arial, sans-serif;
    font-size: 19.5px;
    font-weight: bold;
    fill: #c9181e;
    white-space: pre;
}

.arrow {
    fill: rgba(222, 160, 185, 0.35);
    stroke: #c8305a;
    stroke-width: 1.2;
}

.loop {
    fill: rgba(192, 0, 60, 0.03);
    stroke: #c0003c;
    stroke-width: 3.5;
}
```
